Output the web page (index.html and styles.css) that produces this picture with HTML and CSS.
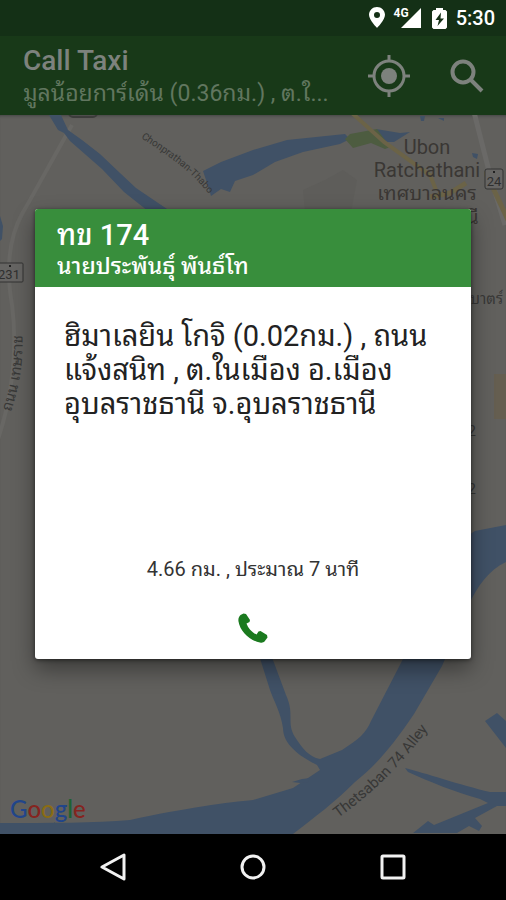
FILE: index.html
```html
<!DOCTYPE html>
<html lang="th">
<head>
    <meta charset="UTF-8">
    <meta name="viewport" content="width=device-width, initial-scale=1.0">
    <title>Call Taxi</title>
    <link rel="stylesheet" href="styles.css">
</head>
<body>
    <div class="status-bar">
        <svg class="status-pin" width="16" height="22" viewBox="0 0 16 22">
            <path fill="#fff" fill-rule="evenodd" d="M8 0C3.600 0 0 3.500 0 7.800 0 13 8 21 8 21s8-8 8-13.200C16 3.500 12.400 0 8 0zm0 5a3 3 0 1 1 0 6 3 3 0 0 1 0-6z"/>
        </svg>
        <span class="network">4G</span>
        <svg class="signal" width="20" height="20" viewBox="0 0 20 20">
            <path fill="#fff" d="M20 0v20H0z"/>
        </svg>
        <svg class="battery" width="15" height="21" viewBox="0 0 15 21">
            <path fill="#fff" fill-rule="evenodd" d="M4 0h7v2h2.500L15 3.500V19.500L13.500 21h-12L0 19.500v-16L1.500 2H4zM9 4.500 3.500 12H7l-1.500 6L12 10.500H8.500z"/>
        </svg>
        <span class="clock">5:30</span>
    </div>

    <header class="app-bar">
        <div class="app-titles">
            <h1>Call Taxi</h1>
            <p>มูลน้อยการ์เด้น (0.36กม.) , ต.ใ...</p>
        </div>
        <button class="icon-button" type="button" aria-label="My location">
            <svg width="42" height="42" viewBox="0 0 42 42">
                <g fill="none" stroke="#7d827d" stroke-width="3">
                    <circle cx="21" cy="21" r="15"/>
                    <path d="M21 0v6M21 36v6M0 21h6M36 21h6"/>
                </g>
                <circle cx="21" cy="21" r="8" fill="#7d827d"/>
            </svg>
        </button>
        <button class="icon-button" type="button" aria-label="Search">
            <svg width="34" height="34" viewBox="0 0 34 34" fill="none" stroke="#7d827d">
                <circle cx="13" cy="13" r="10.500" stroke-width="4"/>
                <path d="M20.500 20.500 32 32" stroke-width="4"/>
            </svg>
        </button>
    </header>

    <main class="map">
        <svg class="map-canvas" viewBox="0 115 506 719" preserveAspectRatio="xMidYMid slice">
            <!-- roads -->
            <g fill="none">
                <path d="M72 125C52 160 36 190 22 214C8 240 6 270 12 305C18 350 12 400-4 445" stroke="#686764" stroke-width="4"/>
                <path d="M474 112 490 175 505 225" stroke="#6a6967" stroke-width="5"/>
                <path d="M484 174h10v16l14 30M430 197l20-4 16-10" stroke="#6b6347" stroke-width="5"/>
                <rect x="69" y="104" width="28" height="13" rx="4" stroke="#3c3c3b" stroke-width="2"/>
            </g>
            <path fill="#5e5d5a" d="M303 190l22-10 18-10 14 10-6 32h-46z"/>
            <path fill="#655e50" d="M494 374h14v45h-14z"/>
            <!-- water -->
            <g fill="#405166">
                <path d="M49 115h12l7 15 14 10 18 14 20 19 16 15 34 23h-22l-24-19-22-23-32-28-6-8-6-3z"/>
                <path d="M203 171l18-9 32-12 34-10 58-6 5 5-10 5-37 8-28 10-22 13-18 6-5 11-9-3-10 7-3-10z"/>
                <path d="M376 129l24 4 10-1-16 10h-8zM420 116h5l-1 5h-3zM438 118h6v3zM472 153l6 1-1 5-4-2z"/>
                <path d="M0 216l3 10-1 13-2 2z"/>
                <path d="M0 823c50 0 95 0 130-3 55-12 100-18 123-20l40-12 27-18-3-5c-16-8-34-20-34-37-2-15-10-29-13-38l-12-38h12l16 43c9 20 0 27 9 42 7 11 14 20 25 22l22-9c17-11 24-17 29-29l32-62C428 610 440 550 475 531l31-6v37c-17 8-28 23-38 44l-26 60-28 48c-23 34-39 52-59 68-20 20-40 35-62 52H0z"/>
                <path d="M485 721l12-8 9 8v27zM405 768c20 5 55 17 85 24h16v14h-9l-22 12 7 8-3 5-10-5-12 7h-44l15-12 6 4 54-22-8-4c-25-7-50-17-72-27zM292 782l10-3 8-1-2 4-8 1z"/>
            </g>
            <path fill="#4d5c40" d="M345 139l5-5 27-5 13 18-5 2-14-6-18 5z"/>
            <path fill="none" stroke="#6b6347" stroke-width="4" d="M352 113 384 142 430 175 436 190"/>

            <!-- labels -->
            <g class="map-label">
                <path id="road-thabo" fill="none" d="M141 138C166 154 197 174 216 204"/>
                <text class="road-small"><textPath href="#road-thabo">Chonprathan-Thabo</textPath></text>
                <path id="road-alley" fill="none" d="M338 818C374 792 400 767 432 724"/>
                <text class="road"><textPath href="#road-alley">Thetsaban 74 Alley</textPath></text>
                <path id="road-left" fill="none" d="M11 412C20 385 24 360 22 324"/>
                <text class="road"><textPath href="#road-left">ถนน เทษราช</textPath></text>
            </g>
            <g class="city" text-anchor="middle">
                <text x="427" y="154">Ubon</text>
                <text x="427" y="177">Ratchathani</text>
                <text x="427" y="200">เทศบาลนคร</text>
                <text x="430" y="224">อุบลราชธานี</text>
            </g>
            <g class="road" text-anchor="end">
                <text x="503" y="304">พิชยบาตร์</text>
                <text x="476" y="436">2</text>
                <text x="476" y="494">2</text>
            </g>
            <g class="shield">
                <rect x="485" y="169" width="18" height="20" rx="2"/>
                <text x="494" y="186" text-anchor="middle">24</text>
                <rect x="-4" y="263" width="27" height="19" rx="1"/>
                <text x="9" y="279" text-anchor="middle">231</text>
                <path d="M493 172h2M9 266h2"/>
            </g>
        </svg>
        <div class="map-logo"><span class="blue">G</span><span class="red">o</span><span class="yellow">o</span><span class="blue">g</span><span class="green">l</span><span class="red">e</span></div>
    </main>

    <nav class="nav-bar">
        <button type="button" aria-label="Back">
            <svg width="28" height="28" viewBox="0 0 28 28"><path d="M25 2v24L3 14z"/></svg>
        </button>
        <button type="button" aria-label="Home">
            <svg width="28" height="28" viewBox="0 0 28 28"><circle cx="14" cy="14" r="11"/></svg>
        </button>
        <button type="button" aria-label="Recent apps">
            <svg width="28" height="28" viewBox="0 0 28 28"><rect x="3" y="3" width="22" height="22" rx="1"/></svg>
        </button>
    </nav>

    <div class="overlay">
        <section class="dialog" role="dialog" aria-labelledby="taxi-number">
            <header class="dialog-header">
                <h2 id="taxi-number">ทข 174</h2>
                <p>นายประพันธุ์ พันธ์โท</p>
            </header>
            <p class="address">ฮิมาเลยิน โกจิ (0.02กม.) , ถนน<br>แจ้งสนิท , ต.ในเมือง อ.เมือง<br>อุบลราชธานี จ.อุบลราชธานี</p>
            <p class="distance">4.66 กม. , ประมาณ 7 นาที</p>
            <button class="call" type="button" aria-label="Call">
                <svg width="30" height="30" viewBox="0 0 30 30">
                    <path fill="#1b7a1f" d="M5.500.500 8 1l4 6-.500 2-3 1.500C10 15 14 19.500 18.500 21.500l2-3 2-.500L29 22l.500 2.500-3 4c-1 1-2.500 1.500-4.500 1C11 27.500 2 18 .500 8.500 0 5.500 1 3.500 2.500 2z"/>
                </svg>
            </button>
        </section>
    </div>
</body>
</html>
```
FILE: styles.css
```css
* {
    box-sizing: border-box;
}
body {
    position: relative;
    display: flex;
    flex-direction: column;
    min-height: 100vh;
    margin: 0;
    background: #000000;
    font-family: Roboto, "Noto Sans Thai Looped", "Droid Sans Thai", Loma, "Noto Sans", sans-serif;
}
h1, h2, p {
    margin: 0;
}
button {
    padding: 0;
    border: 0;
    background: none;
}
svg {
    display: block;
}

/* top bars */
.status-bar {
    display: flex;
    justify-content: flex-end;
    align-items: center;
    height: 36px;
    padding-right: 11px;
    background: #143016;
    color: #ffffff;
}
.network {
    align-self: flex-start;
    margin: 7px 0 0 9px;
    font-size: 12px;
    font-weight: 700;
    line-height: 12px;
}
.signal {
    margin-left: -8px;
}
.battery {
    margin: 0 9px 0 11px;
}
.clock {
    font-size: 20px;
    font-weight: 500;
}
.app-bar {
    display: flex;
    align-items: center;
    height: 79px;
    padding: 0 22px 0 23px;
    background: #183918;
}
.app-titles {
    flex: 1;
    min-width: 0;
    color: #7d827d;
}
.app-titles h1 {
    padding-top: 3px;
    font-size: 28px;
    font-weight: 500;
    line-height: 34px;
}
.app-titles p {
    color: #61765f;
    font-size: 23px;
    line-height: 32px;
    white-space: nowrap;
}
.icon-button {
    margin-left: 40px;
}

/* map */
.map {
    position: relative;
    flex: 1;
    overflow: hidden;
    background: #61605d;
    box-shadow: inset 0 3px 3px -2px #444444;
}
.map-canvas {
    position: absolute;
    width: 100%;
    height: 100%;
}
.map-label, .road {
    fill: #383837;
    font-size: 15px;
}
.map-label .road-small {
    font-size: 10px;
}
.city {
    fill: #3a3734;
    font-size: 20px;
}
.shield rect {
    fill: #666563;
    stroke: #333333;
    stroke-width: 1px;
}
.shield text {
    fill: #2f2f2f;
    font-size: 13px;
}
.shield path {
    stroke: #222222;
    stroke-width: 2px;
}
.map-logo {
    position: absolute;
    bottom: 9px;
    left: 10px;
    font-family: Lato, sans-serif;
    font-size: 24px;
    font-weight: 500;
    line-height: 32px;
}
.blue {
    color: #21458a;
}
.red {
    color: #85241f;
}
.yellow {
    color: #8a6c14;
}
.green {
    color: #1d6331;
}

/* bottom navigation */
.nav-bar {
    display: flex;
    justify-content: center;
    align-items: center;
    gap: 112px;
    height: 66px;
    background: #000000;
}
.nav-bar svg {
    fill: none;
    stroke: #f2f2f2;
    stroke-width: 3px;
    stroke-linejoin: round;
}

/* taxi dialog */
.overlay {
    position: absolute;
    inset: 0;
    display: flex;
    justify-content: center;
    align-items: center;
    padding: 0 35px 32px;
}
.dialog {
    display: flex;
    flex-direction: column;
    flex: 1;
    min-height: 450px;
    overflow: hidden;
    border-radius: 3px;
    background: #ffffff;
    box-shadow: 0 10px 22px rgba(0, 0, 0, 0.4), 0 1px 4px rgba(0, 0, 0, 0.5);
}
.dialog-header {
    padding: 9px 22px 5px;
    background: #388e3c;
    color: #ffffff;
}
.dialog-header h2 {
    font-size: 29px;
    font-weight: 500;
    line-height: 34px;
}
.dialog-header p {
    font-size: 23px;
    font-weight: 500;
    line-height: 30px;
}
.address {
    flex: 1;
    padding: 32px 29px;
    color: #222222;
    font-size: 29px;
    line-height: 34px;
}
.distance {
    color: #333333;
    font-size: 20px;
    line-height: 28px;
    text-align: center;
}
.call {
    align-self: center;
    margin: 30px 0 16px;
}
```
